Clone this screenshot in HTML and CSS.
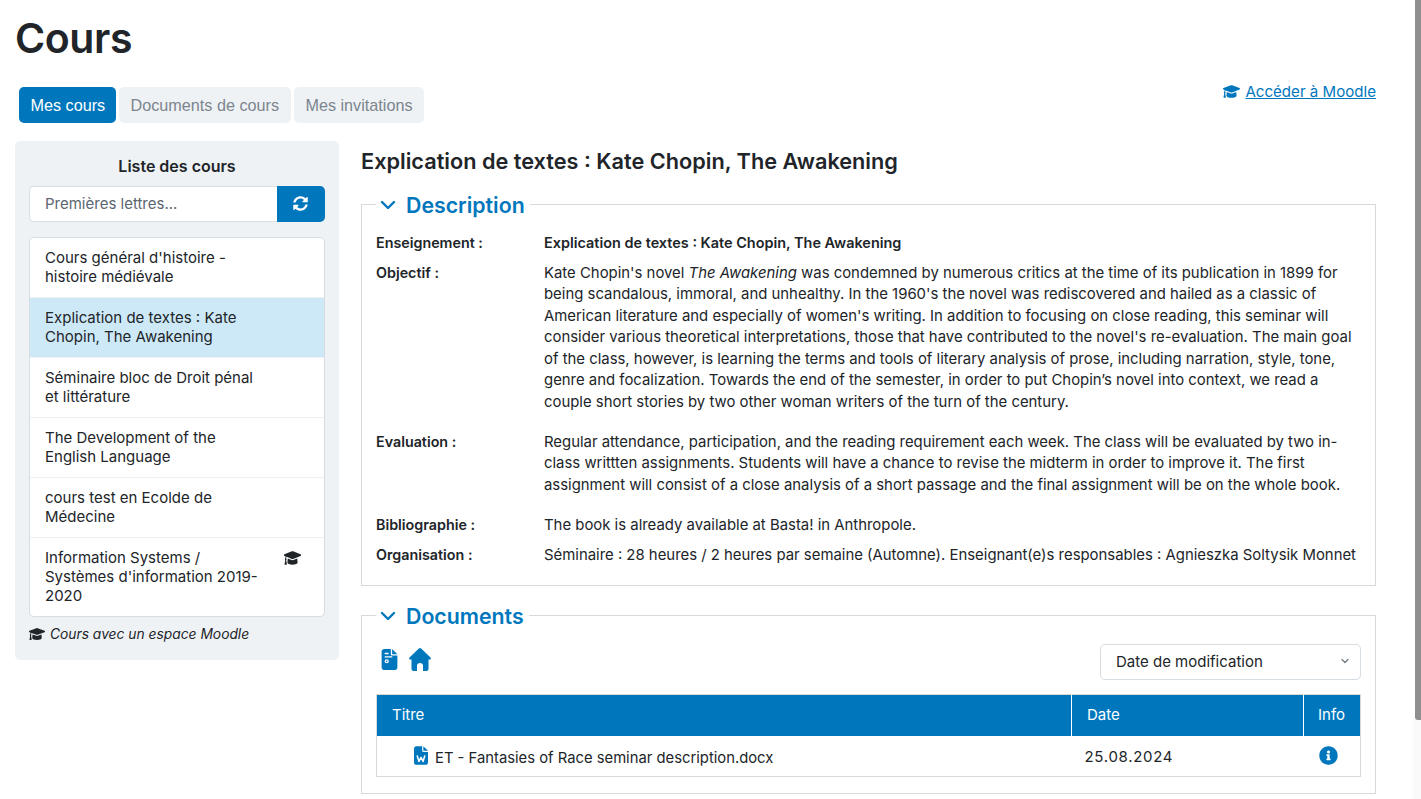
FILE: index.html
```html
<!DOCTYPE html>
<html lang="fr">
<head>
<meta charset="utf-8">
<title>Cours</title>
<link rel="stylesheet" href="styles.css">
</head>
<body>
<svg class="defs" width="0" height="0" aria-hidden="true">
  <symbol id="cap" viewBox="0 60 640 392" preserveAspectRatio="none"><path d="M622.34 153.2L343.4 67.5c-15.2-4.67-31.6-4.67-46.79 0L17.66 153.2c-23.54 7.23-23.54 38.36 0 45.59l48.63 14.94c-10.67 13.19-17.23 29.28-17.88 46.9C38.78 266.15 32 276.11 32 288c0 10.78 5.68 19.85 13.86 25.65L20.33 428.53C18.11 438.52 25.71 448 35.94 448h56.11c10.24 0 17.84-9.48 15.62-19.47L82.14 313.65C90.32 307.85 96 298.78 96 288c0-11.57-6.47-21.25-15.66-26.87.76-15.02 8.44-28.3 20.69-36.72L296.6 284.5c9.06 2.78 26.44 6.25 46.79 0l278.95-85.7c23.55-7.24 23.55-38.36 0-45.6zM352.79 315.09c-28.53 8.76-52.84 3.92-65.59 0l-145.02-44.55L128 384c0 35.35 85.96 64 192 64s192-28.65 192-64l-14.18-113.47-145.03 44.56z"/></symbol>
  <symbol id="chev" viewBox="0 0 16 16"><path d="M2 5l6 6 6-6" fill="none" stroke="currentColor" stroke-width="2.4" stroke-linecap="round" stroke-linejoin="round"/></symbol>
</svg>
<div class="scrolltrack"></div>
<div class="scrollthumb"></div>
<div class="page">
  <h1 class="page-title">Cours</h1>
  <div class="topbar">
    <nav class="tabs">
      <a class="tab tab-active">Mes cours</a>
      <a class="tab">Documents de cours</a>
      <a class="tab">Mes invitations</a>
    </nav>
    <a class="moodle-link"><svg class="icon-cap"><use href="#cap"/></svg><span class="moodle-text">Accéder à Moodle</span></a>
  </div>
  <div class="columns">
    <aside class="sidebar">
      <div class="side-title">Liste des cours</div>
      <div class="search">
        <div class="search-input">Premières lettres...</div>
        <button class="search-btn"><svg class="icon-sync" viewBox="0 0 512 512"><path d="M370.72 133.28C339.458 104.008 298.888 87.962 255.848 88c-77.458.068-144.328 53.178-162.791 126.85-1.344 5.363-6.122 9.15-11.651 9.15H24.103c-7.498 0-13.194-6.807-11.807-14.176C33.933 94.924 134.813 8 256 8c66.448 0 126.791 26.136 171.315 68.685L463.03 40.97C478.149 25.851 504 36.559 504 57.941V192c0 13.255-10.745 24-24 24H345.941c-21.382 0-32.09-25.851-16.971-40.971l41.75-41.749zM32 296h134.059c21.382 0 32.09 25.851 16.971 40.971l-41.75 41.75c31.262 29.273 71.835 45.319 114.876 45.28 77.418-.07 144.315-53.144 162.787-126.849 1.344-5.363 6.122-9.15 11.651-9.15h57.304c7.498 0 13.194 6.807 11.807 14.176C478.067 417.076 377.187 504 256 504c-66.448 0-126.791-26.136-171.315-68.685L48.97 471.03C33.851 486.149 8 475.441 8 454.059V320c0-13.255 10.745-24 24-24z"/></svg></button>
      </div>
      <ul class="course-list">
        <li class="course">Cours général d'histoire - histoire médiévale</li>
        <li class="course course-active">Explication de textes : Kate Chopin, The Awakening</li>
        <li class="course">Séminaire bloc de Droit pénal et littérature</li>
        <li class="course">The Development of the English Language</li>
        <li class="course">cours test en Ecolde de Médecine</li>
        <li class="course">Information Systems / Systèmes d'information 2019-2020<svg class="icon-cap-list"><use href="#cap"/></svg></li>
      </ul>
      <div class="legend-note"><svg class="icon-cap-note"><use href="#cap"/></svg><em>Cours avec un espace Moodle</em></div>
    </aside>
    <main class="content">
      <h2 class="course-title">Explication de textes : Kate Chopin, The Awakening</h2>
      <fieldset class="box box-desc">
        <legend class="box-legend"><svg class="icon-chev"><use href="#chev"/></svg>Description</legend>
        <dl class="info">
          <dt class="first-label">Enseignement :</dt>
          <dd class="strong">Explication de textes : Kate Chopin, The Awakening</dd>
          <dt>Objectif :</dt>
          <dd class="para">Kate Chopin's novel <em>The Awakening</em> was condemned by numerous critics at the time of its publication in 1899 for being scandalous, immoral, and unhealthy. In the 1960's the novel was rediscovered and hailed as a classic of American literature and especially of women's writing. In addition to focusing on close reading, this seminar will consider various theoretical interpretations, those that have contributed to the novel's re-evaluation. The main goal of the class, however, is learning the terms and tools of literary analysis of prose, including narration, style, tone, genre and focalization. Towards the end of the semester, in order to put Chopin’s novel into context, we read a couple short stories by two other woman writers of the turn of the century.</dd>
          <dt>Evaluation :</dt>
          <dd class="para">Regular attendance, participation, and the reading requirement each week. The class will be evaluated by two in-class writtten assignments. Students will have a chance to revise the midterm in order to improve it. The first assignment will consist of a close analysis of a short passage and the final assignment will be on the whole book.</dd>
          <dt>Bibliographie :</dt>
          <dd>The book is already available at Basta! in Anthropole.</dd>
          <dt>Organisation :</dt>
          <dd>Séminaire : 28 heures / 2 heures par semaine (Automne). Enseignant(e)s responsables : Agnieszka Soltysik Monnet</dd>
        </dl>
      </fieldset>
      <fieldset class="box box-docs">
        <legend class="box-legend"><svg class="icon-chev"><use href="#chev"/></svg>Documents</legend>
        <div class="doc-tools">
          <div class="doc-icons">
            <svg class="icon-file" viewBox="0 0 384 512"><path d="M64 0C28.7 0 0 28.7 0 64V448c0 35.3 28.7 64 64 64H320c35.3 0 64-28.7 64-64V160H256c-17.7 0-32-14.3-32-32V0H64zM256 0V128H384L256 0z"/><g fill="#fff"><rect x="72" y="92" width="100" height="34" rx="10"/><rect x="72" y="176" width="190" height="34" rx="10"/><circle cx="125" cy="300" r="50"/></g><circle cx="125" cy="300" r="20" fill="#0077bd"/></svg>
            <svg class="icon-home" viewBox="0 0 22 23"><path fill-rule="evenodd" d="M9.8.6c.7-.6 1.7-.6 2.4 0l9.3 8.9c.8.8.3 2.1-.8 2.1h-1.2V21a2 2 0 0 1-2 2H4.5a2 2 0 0 1-2-2v-9.400H1.300c-1.100 0-1.600-1.300-.8-2.100zM8 23h6v-5.500c0-1.300-1.200-2.500-3-2.500s-3 1.200-3 2.500z"/></svg>
          </div>
          <div class="sort-select">Date de modification<svg class="icon-select" viewBox="0 0 16 16"><path d="M4 6l4 4 4-4" fill="none" stroke="#6c757d" stroke-width="1.6" stroke-linecap="round" stroke-linejoin="round"/></svg></div>
        </div>
        <table class="doc-table">
          <thead><tr><th class="col-title">Titre</th><th class="col-date">Date</th><th class="col-info">Info</th></tr></thead>
          <tbody><tr>
            <td class="cell-title"><svg class="icon-word" viewBox="0 0 384 512"><path d="M64 0C28.7 0 0 28.7 0 64V448c0 35.3 28.7 64 64 64H320c35.3 0 64-28.7 64-64V160H256c-17.7 0-32-14.3-32-32V0H64zM256 0V128H384L256 0z"/><path d="M90 270l46 150 56-110 56 110 46-150" fill="none" stroke="#fff" stroke-width="42" stroke-linejoin="round" stroke-linecap="round"/></svg>ET - Fantasies of Race seminar description.docx</td>
            <td class="cell-date">25.08.2024</td>
            <td class="cell-info"><svg class="icon-info" viewBox="0 0 512 512"><path d="M256 8C119.043 8 8 119.083 8 256c0 136.997 111.043 248 248 248s248-111.003 248-248C504 119.083 392.957 8 256 8zm0 110c23.196 0 42 18.804 42 42s-18.804 42-42 42-42-18.804-42-42 18.804-42 42-42zm56 254c0 6.627-5.373 12-12 12h-88c-6.627 0-12-5.373-12-12v-24c0-6.627 5.373-12 12-12h12v-64h-12c-6.627 0-12-5.373-12-12v-24c0-6.627 5.373-12 12-12h64c6.627 0 12 5.373 12 12v100h12c6.627 0 12 5.373 12 12v24z"/></svg></td>
          </tr></tbody>
        </table>
      </fieldset>
    </main>
  </div>
</div>
</body>
</html>
```

FILE: styles.css
```css
* { box-sizing: border-box; }
html, body { margin: 0; height: 799px; overflow: hidden; background: #fff; }
body { font-family: "Inter", "Noto Sans", sans-serif; font-size: 15px; color: #212529; position: relative; }
.defs { position: absolute; }
.scrolltrack { position: absolute; right: 0; top: 720px; width: 8px; height: 79px; background: #fafafa; }
.scrollthumb { position: absolute; right: 0; top: 0; width: 6px; height: 720px; background: #8f8f8f; border-radius: 0 0 0 3px; }
.page { padding: 0 45px 0 15px; }
.page-title { margin: 0; padding-top: 14px; font-size: 41px; line-height: 48px; font-weight: 600; letter-spacing: -0.4px; }
.topbar { display: flex; justify-content: space-between; margin-top: 25px; padding-left: 4px; }
.tabs { display: flex; gap: 3.4px; }
.tab { height: 36px; padding: 1px 11.5px 0; display: flex; align-items: center; border-radius: 5px; background: #eff2f5; color: #7b858e; font: 16.2px "Liberation Sans", Arial, sans-serif; }
.tab-active { background: #0077bd; color: #fff; padding-right: 10.5px; }
.moodle-link { display: flex; align-items: center; gap: 5px; height: 20px; margin-top: -6px; color: #0077bd; font-size: 15.1px; }
.moodle-text { text-decoration: underline; }
.icon-cap { width: 17px; height: 13px; fill: #0077bd; }
.columns { display: grid; grid-template-columns: 324px 1015px; gap: 22px; margin-top: 18px; }
.sidebar { height: 519px; padding: 14px 14px 0; background: #eff2f5; border-radius: 5px; }
.side-title { text-align: center; font-weight: 600; font-size: 16px; line-height: 22px; }
.search { display: flex; height: 36px; margin-top: 9px; }
.search-input { flex: 1; padding: 0 0 2px 15px; display: flex; align-items: center; background: #fff; border: 1px solid #d6dde3; border-right: 0; border-radius: 5px 0 0 5px; color: #5b6670; }
.search-btn { width: 48px; border: 0; padding: 0 2px 1px 0; background: #0077bd; border-radius: 0 5px 5px 0; display: flex; align-items: center; justify-content: center; }
.icon-sync { width: 15px; height: 15px; fill: #fff; }
.course-list { list-style: none; margin: 15px 0 0; padding: 0; background: #fff; border: 1px solid #d6dde3; border-radius: 5px; overflow: hidden; }
.course { position: relative; padding: 9.5px 60px 11.5px 15px; line-height: 19px; border-top: 1px solid #eef0f2; }
.course:first-child { border-top: 0; }
.course-active { background: #cde9f8; }
.icon-cap-list { position: absolute; top: 13px; right: 23px; width: 17px; height: 14px; fill: #212529; }
.legend-note { display: flex; align-items: center; gap: 5px; margin-top: 8px; font-size: 13.8px; line-height: 18px; }
.icon-cap-note { width: 16px; height: 12px; fill: #212529; }
.course-title { margin: 0; font-size: 21.7px; line-height: 30px; font-weight: 600; padding-top: 5px; }
.box { margin: 0; min-width: 0; border: 1px solid #d9d9d9; padding: 0 14px; }
.box-desc { height: 398px; margin-top: 12px; }
.box-docs { height: 195px; margin-top: 13px; }
.box-legend { padding: 2px 5px 0 4px; margin-left: 0; font-size: 21.3px; line-height: 30px; font-weight: 600; color: #0077bd; display: flex; align-items: center; gap: 10px; }
.icon-chev { width: 16px; height: 16px; color: #0077bd; }
.info { display: grid; grid-template-columns: 168px 1fr; margin: 12px 0 0; line-height: 21.5px; font-size: 14.9px; }
.info dt { font-weight: 600; font-size: 14.3px; margin-top: -1px; }
.info .first-label { margin-top: 0; }
.info dd { margin: 0 0 8.5px; }
.info .strong { font-weight: 600; font-size: 14.45px; margin-bottom: 9px; }
.info .para { margin-bottom: 18.5px; }
.doc-tools { display: flex; justify-content: space-between; align-items: flex-start; margin-top: 13px; }
.doc-icons { display: flex; gap: 11px; align-items: center; padding: 4px 0 0 5px; }
.icon-file { width: 17px; height: 21px; fill: #0077bd; }
.icon-home { width: 22px; height: 23px; fill: #0077bd; }
.sort-select { width: 261px; height: 36px; padding: 0 9px 2px 15px; display: flex; align-items: center; justify-content: space-between; border: 1px solid #d6dde3; border-radius: 5px; }
.icon-select { width: 12px; height: 12px; }
.doc-table { width: 100%; margin-top: 14px; border-collapse: collapse; table-layout: fixed; border: 1px solid #d9d9d9; }
.doc-table th { height: 41px; padding: 0 15px 1px; background: #0077bd; color: #fff; font-weight: 400; text-align: left; border-left: 1px solid #fff; }
.doc-table th:first-child { border-left: 0; }
.col-date { width: 232px; }
.doc-table .col-info { width: 57px; padding: 0 14px 1px; }
.doc-table td { height: 41px; padding: 0 15px; }
.doc-table .cell-title { padding: 2px 14px 0 37px; font-size: 14.8px; }
.doc-table .cell-date { letter-spacing: 0.7px; padding: 2px 13px 0; }
.icon-word { width: 14px; height: 19px; fill: #0077bd; margin-right: 7px; vertical-align: -2px; }
.icon-info { width: 19px; height: 19px; fill: #0077bd; display: block; }
```
